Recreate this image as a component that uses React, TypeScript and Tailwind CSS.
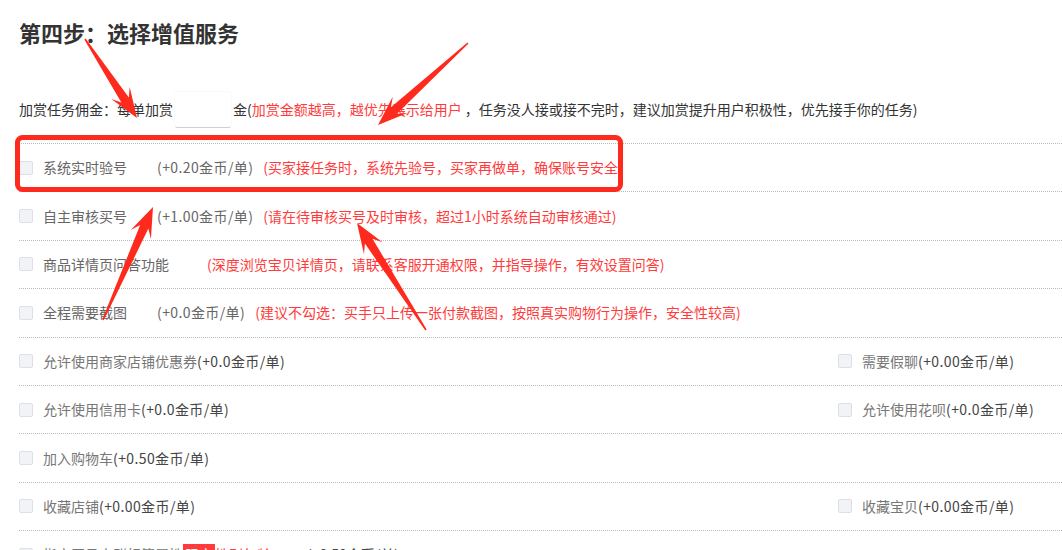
import React from 'react'

type Option = { label: string; price?: string }

const font = { fontFamily: '"Noto Sans CJK SC", "Noto Sans", sans-serif' }

function Checkbox() {
    return <span className="inline-block w-[14px] h-[14px] shrink-0 rounded-[2px] border border-[#dcdfe6] bg-[#f2f3f7]" />
}

function Choice({ label, price }: Option) {
    return (
        <label className="flex items-center gap-[10px] text-[14px]">
            <Checkbox />
            <span className="text-[#777]">{label}</span>
            <span className="-ml-[10px] text-[#444] tracking-[0.4px]">{price}</span>
        </label>
    )
}

const serviceRows = [
    { label: '系统实时验号', price: '(+0.20金币/单)', note: '(买家接任务时，系统先验号，买家再做单，确保账号安全)', noteGap: 'ml-[10px]' },
    { label: '自主审核买号', price: '(+1.00金币/单)', note: '(请在待审核买号及时审核，超过1小时系统自动审核通过)', noteGap: 'ml-[10px]' },
    { label: '商品详情页问答功能', price: '', note: '(深度浏览宝贝详情页，请联系客服开通权限，并指导操作，有效设置问答)', noteGap: 'ml-[38px]' },
    { label: '全程需要截图', price: '(+0.0金币/单)', note: '(建议不勾选：买手只上传一张付款截图，按照真实购物行为操作，安全性较高)', noteGap: 'ml-[10px]' },
]

const pairRows: [Option, Option | null][] = [
    [{ label: '允许使用商家店铺优惠券', price: '(+0.0金币/单)' }, { label: '需要假聊', price: '(+0.00金币/单)' }],
    [{ label: '允许使用信用卡', price: '(+0.0金币/单)' }, { label: '允许使用花呗', price: '(+0.0金币/单)' }],
    [{ label: '加入购物车', price: '(+0.50金币/单)' }, null],
    [{ label: '收藏店铺', price: '(+0.00金币/单)' }, { label: '收藏宝贝', price: '(+0.00金币/单)' }],
]

// tapered annotation arrow, from tail (x1,y1) to tip (x2,y2)
function arrowPoints(x1: number, y1: number, x2: number, y2: number, head = 28, barb = 11, neck = 4.5) {
    const dx = x2 - x1
    const dy = y2 - y1
    const len = Math.hypot(dx, dy)
    const ux = dx / len
    const uy = dy / len
    const px = -uy
    const py = ux
    const at = (d: number, w: number) => `${x1 + ux * d + px * w},${y1 + uy * d + py * w}`
    return [
        at(0, 0.8),
        at(len - head * 0.72, neck),
        at(len - head, barb),
        `${x2},${y2}`,
        at(len - head, -barb),
        at(len - head * 0.72, -neck),
        at(0, -0.8),
    ].join(' ')
}

function Annotations() {
    return (
        <svg className="absolute left-0 top-0 pointer-events-none" width="1062" height="550">
            <rect x="17.5" y="137.5" width="603" height="52" rx="5" fill="none" stroke="#ff2a1e" strokeWidth="5" />
            <polygon points={arrowPoints(85, 39, 137, 118, 30, 11, 4.5)} fill="#ff2a1e" />
            <polygon points={arrowPoints(468, 43, 378, 125, 30, 11, 4.5)} fill="#ff2a1e" />
            <polygon points={arrowPoints(103, 320, 153, 207, 30, 11, 4.5)} fill="#ff2a1e" />
            <polygon points={arrowPoints(426, 330, 357, 223, 30, 11, 4.5)} fill="#ff2a1e" />
        </svg>
    )
}

export default function App() {
    return (
        <div className="relative w-[1062px] h-[550px] overflow-hidden bg-white" style={font}>
            <div className="pl-[19px] pt-[17px]">
                <h2 className="text-[22px] leading-[30px] font-bold text-[#333]">第四步：选择增值服务</h2>

                <div className="mt-[44px] flex items-center h-[37px] text-[14px] text-[#333]">
                    <span>加赏任务佣金：每单加赏</span>
                    <input className="mx-[1px] w-[58px] h-[37px] rounded-[4px] border border-[#fafafa] border-b-[#d0d0d0] bg-white outline-none" />
                    <span>金(</span>
                    <span className="text-[#ff3b3b]">加赏金额越高，越优先展示给用户</span>
                    <span>&nbsp;，任务没人接或接不完时，建议加赏提升用户积极性，优先接手你的任务)</span>
                </div>

                <div className="mt-[15px]">
                    {serviceRows.map(row => (
                        <div key={row.label} className="h-[48.4px] border-t border-dotted border-[#bbb] flex items-center text-[14px] whitespace-nowrap">
                            <Checkbox />
                            <span className="ml-[10px] min-w-[114px] text-[#666]">{row.label}</span>
                            <span className="text-[#666] tracking-[0.4px]">{row.price}</span>
                            <span className={`${row.noteGap} text-[#ff3b3b]`}>{row.note}</span>
                        </div>
                    ))}

                    {pairRows.map(([left, right]) => (
                        <div key={left.label} className="h-[48.4px] border-t border-dotted border-[#bbb] flex items-center whitespace-nowrap">
                            <div className="w-[819px]">
                                <Choice {...left} />
                            </div>
                            {right && <Choice {...right} />}
                        </div>
                    ))}

                    <div className="h-[48.4px] border-t border-dotted border-[#bbb] flex items-center text-[14px] whitespace-nowrap">
                        <Checkbox />
                        <span className="ml-[10px] text-[#777]">指定买号人群标签属性</span>
                        <span className="bg-[#ff3b3b] text-white px-[2px]">限定</span>
                        <span className="text-[#ff3b3b]">性别年龄</span>
                        <span className="ml-[36px] text-[#444]">(+0.50金币/单)</span>
                    </div>
                </div>
            </div>

            <Annotations />
        </div>
    )
}
